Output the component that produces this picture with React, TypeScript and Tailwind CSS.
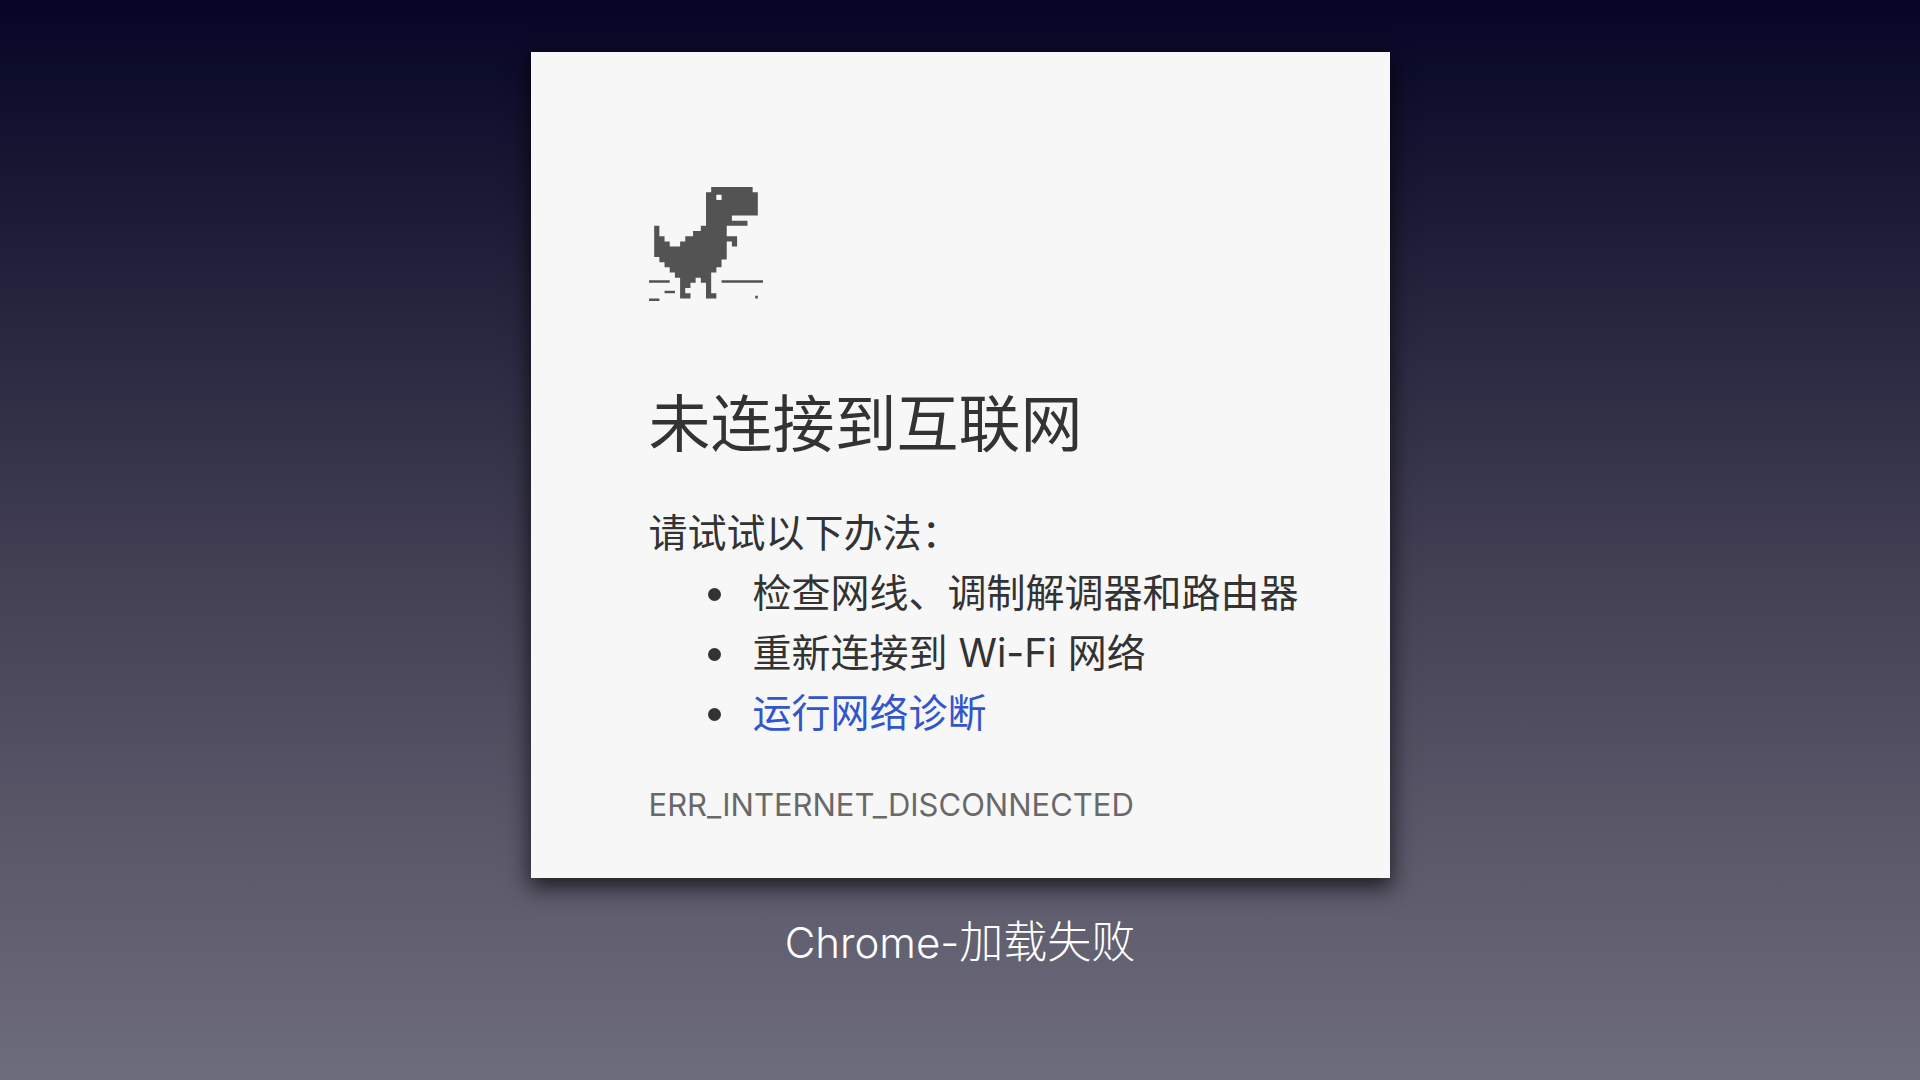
import React from 'react';

const suggestions = ['检查网线、调制解调器和路由器', '重新连接到 Wi-Fi 网络'];

const DinoIcon: React.FC = () => (
  <svg viewBox="0 0 44 44" className="w-[114px] h-[114px]" fill="#535353" aria-hidden="true">
    <path d="M24 0H40V2H42V11H32V13H38V15H30V19H34V23H32V21H30V28H28V31H26V33H24V41H26V43H22V37H20V35H18V37H16V39H14V41H16V43H12V35H10V33H8V31H6V29H4V27H2V15H4V19H6V21H8V23H12V21H14V19H17V17H20V15H22V2H24Z" />
    <path d="M26 3H28V5H26Z" fill="#ffffff" />
    {/* ground */}
    <path d="M0 36H8V37H0ZM28 36H44V37H28ZM6 40H10V41H6ZM0 43H4V44H0ZM41 42H42V43H41Z" />
  </svg>
);

const App: React.FC = () => {
  return (
    <div className="min-h-screen flex flex-col items-center pt-[52px] bg-[linear-gradient(to_bottom,#060526_0%,#21213b_25%,#454255_55%,#6e6d7c_100%)] font-['Inter','Noto_Sans_CJK_SC',sans-serif]">
      <main className="w-full max-w-[859px] bg-[#f7f7f7] text-[#333333] px-[118px] pt-[135px] pb-[49px] shadow-[0_8px_20px_2px_rgba(0,0,0,0.65)]">
        <DinoIcon />
        <h1 className="mt-[78px] text-[62px] leading-[92px]">未连接到互联网</h1>
        <div className="mt-8 text-[39px] leading-[60px] whitespace-nowrap">
          <p>请试试以下办法：</p>
          <ul className="list-disc pl-[91px]">
            {suggestions.map((text) => (
              <li key={text} className="pl-[13px]">{text}</li>
            ))}
            <li className="pl-[13px]">
              <a href="#diagnose" className="text-[#3355cc]">运行网络诊断</a>
            </li>
          </ul>
        </div>
        <p className="mt-[38px] text-[31px] leading-[48px] text-[#696969]">ERR_INTERNET_DISCONNECTED</p>
      </main>
      <p className="mt-8 text-[44px] leading-[64px] font-light text-white">
        <span className="text-[42px]">Chrome-</span>加载失败
      </p>
    </div>
  );
};

export default App;
